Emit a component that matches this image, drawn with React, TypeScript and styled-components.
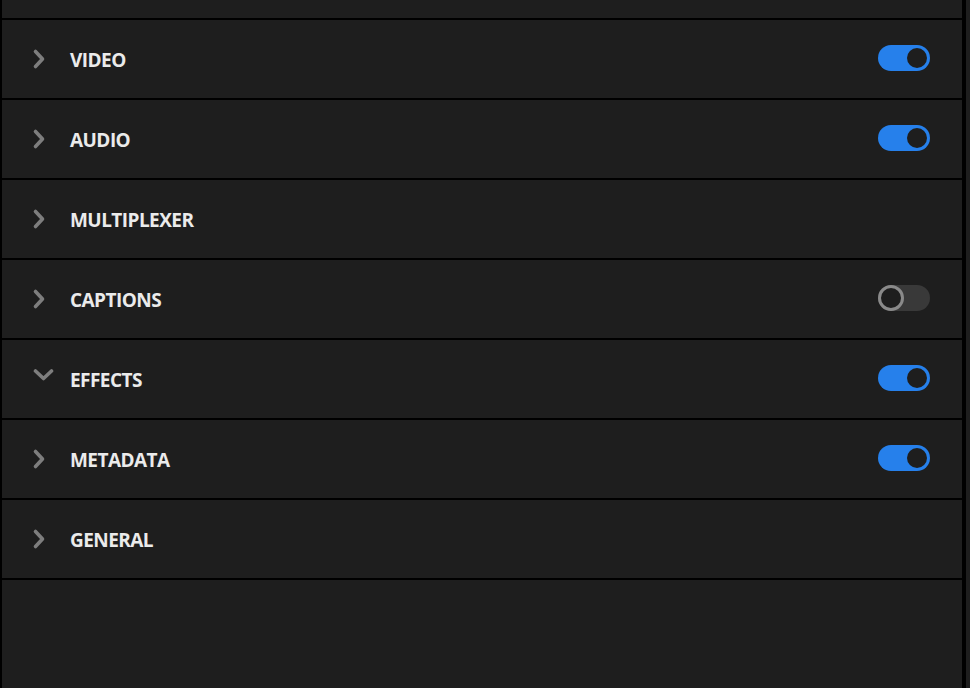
import React, { useState } from 'react'
import styled, { createGlobalStyle } from 'styled-components'

const GlobalStyle = createGlobalStyle`
  html, body {
    margin: 0;
    padding: 0;
    background: #1e1e1e;
  }
  body {
    font-family: 'Open Sans', 'Noto Sans', sans-serif;
  }
`

type Section = { label: string; enabled?: boolean; open?: boolean }

const sections: Section[] = [
  { label: 'VIDEO', enabled: true },
  { label: 'AUDIO', enabled: true },
  { label: 'MULTIPLEXER' },
  { label: 'CAPTIONS', enabled: false },
  { label: 'EFFECTS', enabled: true, open: true },
  { label: 'METADATA', enabled: true },
  { label: 'GENERAL' },
]

function Chevron({ open }: { open?: boolean }) {
  return (
    <ChevronBox $open={open}>
      {open ? (
        <svg width="22" height="14" viewBox="0 0 22 14">
          <path d="M3.5 3 L11.5 10.5 L19.5 3" fill="none" stroke="#7e7e7e" strokeWidth="3.6" strokeLinecap="round" strokeLinejoin="round" />
        </svg>
      ) : (
        <svg width="14" height="22" viewBox="0 0 14 22">
          <path d="M3.5 3.5 L10.5 11 L3.5 18.5" fill="none" stroke="#7e7e7e" strokeWidth="3.6" strokeLinecap="round" strokeLinejoin="round" />
        </svg>
      )}
    </ChevronBox>
  )
}

function Row({ section }: { section: Section }) {
  const [on, setOn] = useState<boolean | undefined>(section.enabled)
  return (
    <RowBox>
      <Chevron open={section.open} />
      <Label>{section.label}</Label>
      {on !== undefined && (
        <Switch $on={on} onClick={() => setOn(!on)}>
          <Knob $on={on} />
        </Switch>
      )}
    </RowBox>
  )
}

export default function App() {
  return (
    <>
      <GlobalStyle />
      <Panel>
        <TopStub />
        {sections.map((s) => (
          <Row key={s.label} section={s} />
        ))}
      </Panel>
    </>
  )
}

const Panel = styled.div`
  width: 966px;
  min-height: 688px;
  box-sizing: border-box;
  border-left: 2px solid #000;
  border-right: 4px solid #000;
  background: #1e1e1e;
`

const TopStub = styled.div`
  height: 18px;
  border-bottom: 2px solid #000;
`

const RowBox = styled.div`
  height: 78px;
  border-bottom: 2px solid #000;
  display: flex;
  align-items: center;
  padding: 0 32px 0 30px;
`

const ChevronBox = styled.div<{ $open?: boolean }>`
  width: 38px;
  display: flex;
  align-items: center;
  justify-content: flex-start;
  margin-top: ${(p) => (p.$open ? '-8px' : '-1px')};
`

const Label = styled.div`
  flex: 1;
  color: #ebebeb;
  font-weight: 700;
  font-size: 19px;
  letter-spacing: -0.55px;
  padding-top: 2px;
`

const Switch = styled.div<{ $on: boolean }>`
  width: 52px;
  height: 26px;
  border-radius: 13px;
  box-sizing: border-box;
  background: ${(p) => (p.$on ? '#2680eb' : '#393939')};
  display: flex;
  align-items: center;
  justify-content: ${(p) => (p.$on ? 'flex-end' : 'flex-start')};
  padding: 0 3px;
  margin-top: -2px;
  cursor: pointer;
`

const Knob = styled.div<{ $on: boolean }>`
  border-radius: 50%;
  box-sizing: border-box;
  background: #1e1e1e;
  width: ${(p) => (p.$on ? '20px' : '26px')};
  height: ${(p) => (p.$on ? '20px' : '26px')};
  margin: ${(p) => (p.$on ? '0' : '0 0 0 -3px')};
  border: ${(p) => (p.$on ? 'none' : '3px solid #8a8a8a')};
`
